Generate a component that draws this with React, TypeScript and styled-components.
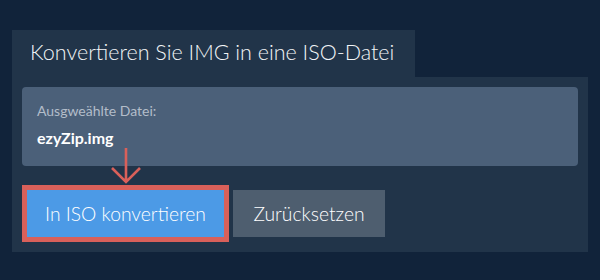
import React from "react";
import styled, { createGlobalStyle } from "styled-components";

const Global = createGlobalStyle`
  html, body { margin: 0; padding: 0; background: #11233a; }
  body { font-family: Lato, "Open Sans", sans-serif; }
`;

const Page = styled.div`
  width: 600px;
  height: 280px;
  box-sizing: border-box;
  padding: 30px 12px 0 12px;
  background: #11233a;
`;

const Tab = styled.div`
  display: inline-block;
  height: 47px;
  box-sizing: border-box;
  padding: 7px 21px 0 18px;
  background: #213449;
  color: #f2f4f7;
  font-family: "Lato Light", Lato, sans-serif;
  font-size: 21.5px;
  font-weight: 300;
  line-height: 30px;
  vertical-align: top;
`;

const Panel = styled.div`
  width: 576px;
  box-sizing: border-box;
  padding: 10px 10px 15px 10px;
  background: #213449;
`;

const FileBox = styled.div`
  height: 79px;
  box-sizing: border-box;
  padding: 15px 15px 0 15px;
  background: #4b6079;
  border-radius: 4px;
`;

const Label = styled.div`
  color: #b3bdc9;
  font-size: 14px;
  line-height: 18px;
`;

const FileName = styled.div`
  margin-top: 8px;
  color: #ffffff;
  font-size: 16px;
  font-weight: 700;
  line-height: 20px;
`;

const Actions = styled.div`
  position: relative;
  display: flex;
  align-items: flex-start;
  gap: 9px;
  margin-top: 24px;
  padding-left: 5px;
`;

const Button = styled.button<{ $primary?: boolean; $w: number }>`
  width: ${(p) => p.$w}px;
  height: 47px;
  padding: 0;
  border: none;
  border-radius: 0;
  font-family: "Lato Light", Lato, sans-serif;
  font-size: 19.3px;
  font-weight: 300;
  text-align: center;
  color: #ffffff;
  background: ${(p) => (p.$primary ? "#4c9ae6" : "#4e5e6f")};
  outline: ${(p) => (p.$primary ? "5px solid #d9605a" : "none")};
  cursor: pointer;
`;

const Arrow = styled.svg`
  position: absolute;
  left: 88px;
  top: -42px;
  overflow: visible;
`;

export default function App() {
  return (
    <>
      <Global />
      <Page>
        <Tab>Konvertieren Sie IMG in eine ISO-Datei</Tab>
        <Panel>
          <FileBox>
            <Label>Ausgweählte Datei:</Label>
            <FileName>ezyZip.img</FileName>
          </FileBox>
          <Actions>
            <Button $primary $w={197}>In ISO konvertieren</Button>
            <Button $w={152}>Zurücksetzen</Button>
            <Arrow width="32" height="40" viewBox="0 0 32 40">
              <path
                d="M16 0 V34 M2 20 L16 34 L30 20"
                fill="none"
                stroke="#d9605a"
                strokeWidth="2.6"
              />
            </Arrow>
          </Actions>
        </Panel>
      </Page>
    </>
  );
}
